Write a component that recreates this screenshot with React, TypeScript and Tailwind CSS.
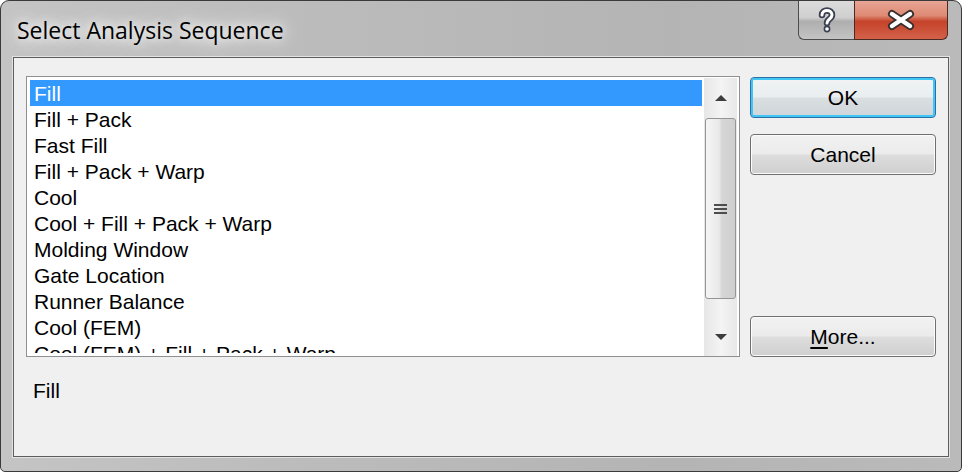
import React from 'react';

const items = [
  'Fill',
  'Fill + Pack',
  'Fast Fill',
  'Fill + Pack + Warp',
  'Cool',
  'Cool + Fill + Pack + Warp',
  'Molding Window',
  'Gate Location',
  'Runner Balance',
  'Cool (FEM)',
  'Cool (FEM) + Fill + Pack + Warp',
];

const HelpButton: React.FC = () => (
  <div className="w-[56px] h-[40px] flex items-center justify-center rounded-bl-[6px] border border-t-0 border-r-0 border-[#4b4b4b] bg-[linear-gradient(to_bottom,#dcdcdc_0%,#cfcfcf_45%,#aeaeae_55%,#c4c4c4_100%)]">
    <svg width="22" height="26" viewBox="-11 -13 22 26">
      <path d="M-5 -5 C-5 -11 5 -11 5 -5 C5 -1 0 -1 0 3" fill="none" stroke="#3b4150" strokeWidth="6.5" strokeLinecap="round" strokeLinejoin="round" />
      <circle cx="0" cy="9" r="3.4" fill="#3b4150" />
      <path d="M-5 -5 C-5 -11 5 -11 5 -5 C5 -1 0 -1 0 3" fill="none" stroke="#ffffff" strokeWidth="3" strokeLinecap="round" strokeLinejoin="round" />
      <circle cx="0" cy="9" r="1.8" fill="#ffffff" />
    </svg>
  </div>
);

const CloseButton: React.FC = () => (
  <div className="w-[94px] h-[40px] flex items-center justify-center rounded-br-[6px] border border-t-0 border-[#4b2a22] bg-[linear-gradient(to_bottom,#e9a797_0%,#de8a74_40%,#c5432a_55%,#d4614a_100%)]">
    <svg width="32" height="24" viewBox="-16 -12 32 24">
      <path d="M-9 -6 L9 6 M9 -6 L-9 6" stroke="#3a2f2f" strokeWidth="8" strokeLinecap="round" />
      <path d="M-9 -6 L9 6 M9 -6 L-9 6" stroke="#ffffff" strokeWidth="4.5" strokeLinecap="round" />
    </svg>
  </div>
);

const Arrow: React.FC<{ down?: boolean }> = ({ down }) => (
  <svg width="14" height="8" viewBox="0 0 14 8">
    <path d={down ? 'M1 1 L13 1 L7 7 Z' : 'M1 7 L13 7 L7 1 Z'} fill="#3d3d3d" />
  </svg>
);

const Scrollbar: React.FC = () => (
  <div className="w-[33px] h-full flex flex-col bg-[linear-gradient(to_right,#e6e6e6,#f4f4f4_50%,#e8e8e8)]">
    <div className="h-[40px] flex items-center justify-center">
      <Arrow />
    </div>
    <div className="h-[181px] mx-[1px] rounded-[3px] border border-[#959595] flex items-center justify-center bg-[linear-gradient(to_right,#f5f5f5,#e9e9e9_45%,#d6d6d6_55%,#cfcfcf)]">
      <div className="flex flex-col gap-[2px]">
        <div className="w-[13px] h-[2px] bg-[#4d4d4d]" />
        <div className="w-[13px] h-[2px] bg-[#4d4d4d]" />
        <div className="w-[13px] h-[2px] bg-[#4d4d4d]" />
      </div>
    </div>
    <div className="flex-1" />
    <div className="h-[40px] flex items-center justify-center">
      <Arrow down />
    </div>
  </div>
);

const WinButton: React.FC<{ children: React.ReactNode; isDefault?: boolean; className?: string }> = ({ children, isDefault, className }) => (
  <div
    className={`w-[186px] h-[41px] flex items-center justify-center rounded-[4px] text-[21px] text-black ${
      isDefault
        ? 'border border-[#2c6fa8] shadow-[inset_0_0_0_2px_#41c6f4] bg-[linear-gradient(to_bottom,#f1f3f4_0%,#eaeef0_48%,#d9dee1_52%,#cfd5d8_100%)]'
        : 'border border-[#707070] shadow-[inset_0_0_0_1px_#fbfbfb] bg-[linear-gradient(to_bottom,#f2f2f2_0%,#ebebeb_48%,#dddddd_52%,#cfcfcf_100%)]'
    } ${className ?? ''}`}
  >
    {children}
  </div>
);

const App: React.FC = () => {
  return (
    <div className="w-[962px] h-[472px] bg-white font-['Liberation_Sans',Arial,sans-serif]">
      <div className="w-full h-full flex flex-col rounded-t-[9px] rounded-b-[5px] border border-[#3a3a3a] bg-[linear-gradient(to_right,#c4c4c4,#bcbcbc_30%,#b4b4b4_70%,#bababa)] overflow-hidden">
        {/* Title bar */}
        <div className="h-[56px] flex items-start justify-between">
          <div className="pl-[16px] pt-[14px] text-[23px] leading-[30px] text-black font-['Open_Sans','Noto_Sans',sans-serif] [text-shadow:0_0_10px_#ffffff,0_0_18px_#ffffff,0_0_26px_#f4f4f4]">
            Select Analysis Sequence
          </div>
          <div className="flex -mt-px mr-[13px]">
            <HelpButton />
            <CloseButton />
          </div>
        </div>

        {/* Client area */}
        <div className="mx-[12px] h-[400px] border border-[#5d5d5d] bg-[#f0f0f0] shadow-[0_0_0_1px_#e2e2e2]">
          <div className="flex pl-[12px] pt-[18px]">
            {/* Listbox */}
            <div className="w-[714px] h-[281px] border border-[#8f9092] bg-white flex pl-[3px] pt-[3px] pr-[1px] overflow-hidden">
              <div className="w-[672px] h-[273px] overflow-hidden">
                {items.map((item, i) => (
                  <div
                    key={item}
                    className={`h-[26px] leading-[28px] pl-[4px] text-[21px] whitespace-nowrap ${
                      i === 0 ? 'bg-[#3399ff] text-white' : 'text-black'
                    }`}
                  >
                    {item}
                  </div>
                ))}
              </div>
              <div className="ml-[2px] -mt-[2px] h-[279px]">
                <Scrollbar />
              </div>
            </div>

            {/* Buttons */}
            <div className="ml-[10px] h-[281px] flex flex-col pt-[1px]">
              <WinButton isDefault>OK</WinButton>
              <WinButton className="mt-[16px]">Cancel</WinButton>
              <WinButton className="mt-auto">
                <span>
                  <span className="underline underline-offset-[3px]">M</span>ore...
                </span>
              </WinButton>
            </div>
          </div>

          <div className="pl-[19px] mt-[21px] text-[21px] leading-[26px] text-black">Fill</div>
        </div>
      </div>
    </div>
  );
};

export default App;
